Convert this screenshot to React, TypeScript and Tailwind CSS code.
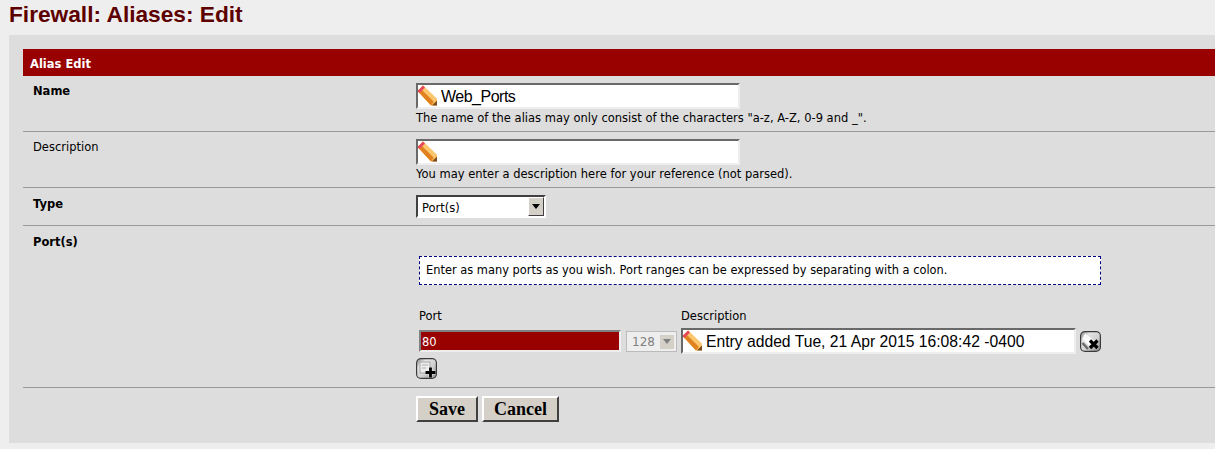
import React from "react";

const Pencil = () => (
  <svg width="21" height="21" viewBox="0 0 21 21" className="shrink-0 -ml-[1px]">
    <path d="M0.5 6 L6 0.5 L20 14 L20 20.5 L14 20.5 Z" fill="#f5ae48" />
    <path d="M6 0.5 L20 14 L20 20.5 L16.5 16.5 L3 3.5 Z" fill="#fbc66e" />
    <path d="M0.5 6 L14 20.5 L16.5 16.5 L3.5 3.5 Z" fill="#e0821f" />
    <path d="M0.5 6 L6 0.5 L8 2.5 L2.5 8 Z" fill="#e5475c" />
    <path d="M15 20.5 L20 15.5 L20 20.5 Z" fill="#7a4a20" />
  </svg>
);

const Field = ({ value, w = "w-[324px]", size = "text-[15.7px]" }: { value?: string; w?: string; size?: string }) => (
  <div className={`${w} h-[26px] bg-white flex items-start overflow-hidden border-t-[2px] border-l-[2px] border-t-[#696969] border-l-[#696969] border-r-[2px] border-b-[2px] border-r-[#eeeeee] border-b-[#eeeeee]`}>
    <Pencil />
    <span className={`ml-[3px] ${size} leading-[24px] text-black font-['Liberation_Sans',sans-serif] whitespace-nowrap`}>{value}</span>
  </div>
);

const IconButton = ({ kind }: { kind: "plus" | "x" }) => (
  <svg width="21" height="21" viewBox="0 0 21 21" className="shrink-0">
    <defs>
      <linearGradient id={`g-${kind}`} x1="0" y1="0" x2="1" y2="1">
        <stop offset="0" stopColor="#8a8a8a" />
        <stop offset="0.25" stopColor="#e4e4e4" />
        <stop offset="0.6" stopColor="#d0d0d0" />
        <stop offset="1" stopColor="#8d8d8d" />
      </linearGradient>
    </defs>
    <rect x="0" y="0" width="21" height="21" rx="5" fill="#3a3a3a" />
    <rect x="1.2" y="1.2" width="18.6" height="18.6" rx="3.5" fill={`url(#g-${kind})`} />
    {kind === "plus" ? (
      <>
        <rect x="4" y="4" width="10" height="11" fill="#ececec" stroke="#a8a8a8" />
        <path d="M6 7h6M6 10h4" stroke="#b0b0b0" />
        <path d="M14.5 9.5v10M9.5 14.5h10" stroke="#ffffff" strokeWidth="4.2" opacity="0.55" />
        <path d="M14.5 9.5v10M9.5 14.5h10" stroke="#000" strokeWidth="2.8" />
      </>
    ) : (
      <>
        <path d="M5 2.5 L15 10 L9 15 L2.5 8 Z" fill="#fafafa" />
        <path d="M2.5 12 L8 18" stroke="#6a6a6a" strokeWidth="2.5" />
        <path d="M10 9.5 L17.5 17 M17.5 9.5 L10 17" stroke="#000" strokeWidth="3.2" />
      </>
    )}
  </svg>
);

const Btn = ({ children, px }: { children: React.ReactNode; px: string }) => (
  <button className={`h-[26px] ${px} bg-[#d4d0c8] border-t-2 border-l-2 border-t-white border-l-white border-r-2 border-b-2 border-r-[#404040] border-b-[#404040] text-[18px] leading-[20px] font-bold text-black font-['Liberation_Serif',serif]`}>
    {children}
  </button>
);

const Help = ({ children }: { children: React.ReactNode }) => (
  <div className="text-[11.5px] leading-[14px] mt-[2px] text-black whitespace-nowrap">{children}</div>
);

export default function App() {
  return (
    <div className="h-[449px] w-[1215px] overflow-hidden bg-[#eeeeee] font-['DejaVu_Sans',Verdana,sans-serif] text-black">
      <h1 className="h-[35px] pl-[9px] pt-[1px] text-[22.7px] leading-[26px] font-bold text-[#5d0000] font-['Liberation_Sans',sans-serif]">
        Firewall: Aliases: Edit
      </h1>
      <div className="ml-[9px] h-[408px] bg-[#dddddd] pl-[14px] pt-[14px]">
        <div className="h-[27px] bg-[#990000] pl-[7px] text-white text-[11.5px] font-bold leading-[30px]">Alias Edit</div>

        <div className="h-[56px] flex border-b border-b-[#999999]">
          <div className="w-[393px] pl-[10px] pt-[8px] text-[11.5px] leading-[14px] font-bold">Name</div>
          <div className="pt-[7px]">
            <Field value="Web_Ports" size="text-[16px] tracking-[-0.5px]" />
            <Help>The name of the alias may only consist of the characters "a-z, A-Z, 0-9 and _".</Help>
          </div>
        </div>

        <div className="h-[56px] flex border-b border-b-[#999999]">
          <div className="w-[393px] pl-[10px] pt-[8px] text-[11.5px] leading-[14px]">Description</div>
          <div className="pt-[7px]">
            <Field />
            <Help>You may enter a description here for your reference (not parsed).</Help>
          </div>
        </div>

        <div className="h-[38px] flex border-b border-b-[#999999]">
          <div className="w-[393px] pl-[10px] pt-[9px] text-[11.5px] leading-[14px] font-bold">Type</div>
          <div className="pt-[7px]">
            <div className="w-[130px] h-[23px] flex bg-white border-t-2 border-l-2 border-t-[#404040] border-l-[#404040] border-r-2 border-b-2 border-r-white border-b-white">
              <span className="flex-1 pl-[4px] text-[11.5px] leading-[22px]">Port(s)</span>
              <span className="w-[16px] bg-[#d4d0c8] border border-t-white border-l-white border-r-[#404040] border-b-[#404040] flex items-center justify-center">
                <span className="border-x-[4px] border-x-transparent border-t-[5px] border-t-black" />
              </span>
            </div>
          </div>
        </div>

        <div className="h-[162px] flex border-b border-b-[#999999]">
          <div className="w-[393px] pl-[10px] pt-[9px] text-[11.5px] leading-[14px] font-bold">Port(s)</div>
          <div className="flex-1">
            <div className="ml-[3px] mt-[30px] w-[682px] h-[29px] bg-white border border-dashed border-[#000080] pl-[6px] text-[11.41px] leading-[26px] whitespace-nowrap">
              Enter as many ports as you wish. Port ranges can be expressed by separating with a colon.
            </div>
            <div className="flex ml-[3px] mt-[24px] text-[11.5px] leading-[14px]">
              <span className="w-[262px]">Port</span>
              <span>Description</span>
            </div>
            <div className="flex items-start mt-[5px] ml-[3px]">
              <div className="w-[202px] h-[22px] mt-[2px] bg-[#990000] border-2 border-t-[#808080] border-l-[#808080] border-r-[#eeeeee] border-b-[#eeeeee] pl-[1px] text-white text-[11.5px] leading-[21px]">80</div>
              <div className="ml-[5px] mt-[3px] w-[51px] h-[21px] bg-[#eeeeee] border border-[#bbbbbb] flex items-center text-[#808080] text-[12px] pl-[5px]">
                <span className="flex-1">128</span>
                <span className="w-[16px] h-[16px] mr-[1px] bg-[#d4d0c8] border border-[#eeeeee] flex items-center justify-center">
                  <span className="border-x-[4px] border-x-transparent border-t-[5px] border-t-[#808080]" />
                </span>
              </div>
              <div className="ml-[4px]">
                <Field value="Entry added Tue, 21 Apr 2015 16:08:42 -0400" w="w-[395px]" />
              </div>
              <div className="ml-[4px] mt-[3px]"><IconButton kind="x" /></div>
            </div>
            <div className="mt-[4px]"><IconButton kind="plus" /></div>
          </div>
        </div>

        <div className="flex">
          <div className="w-[393px]" />
          <div className="flex gap-[4px] pt-[8px]">
            <Btn px="px-[11px]">Save</Btn>
            <Btn px="px-[10px]">Cancel</Btn>
          </div>
        </div>
      </div>
    </div>
  );
}
